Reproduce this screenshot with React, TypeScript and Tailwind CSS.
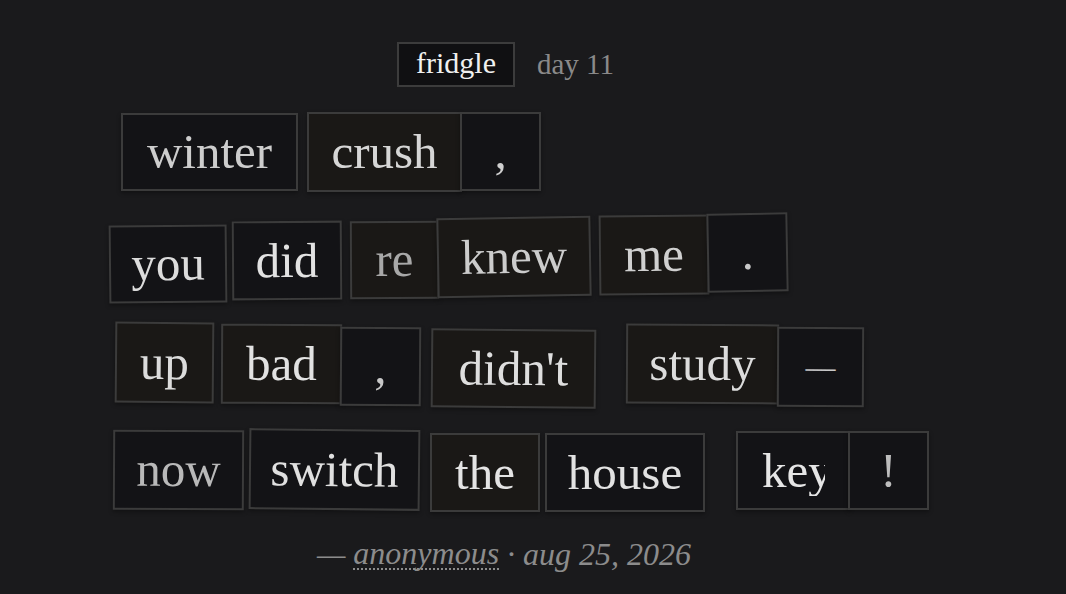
import React from "react";

type T = { t: string; c: string; inner?: string };

const WARM = "bg-[#1a1816]";
const COOL = "bg-[#131316]";

const rows: { cls: string; tiles: T[] }[] = [
  {
    cls: "mt-[25px] h-[80px]",
    tiles: [
      { t: "winter", c: `ml-[121px] mt-[1px] w-[177px] h-[78px] ${COOL} text-[#cdcdcd]` },
      { t: "crush", c: `ml-[9px] mt-0 w-[155px] h-[80px] ${WARM} text-[#d6d6d6]` },
      { t: ",", c: `ml-[-2px] mt-0 w-[81px] h-[79px] ${COOL} text-[#cfcfcf]` },
    ],
  },
  {
    cls: "mt-[21px] h-[92px]",
    tiles: [
      { t: "you", c: `ml-[109px] mt-[12px] w-[118px] h-[78px] ${COOL} text-[#dcdcdc] rotate-[-0.6deg]` },
      { t: "did", c: `ml-[5px] mt-[8px] w-[110px] h-[79px] ${COOL} text-[#e2e2e2] rotate-[-0.4deg]` },
      { t: "re", c: `ml-[8px] mt-[8px] w-[89px] h-[78px] ${WARM} text-[#a8a8a8] rotate-[-0.3deg]` },
      { t: "knew", c: `ml-[-2px] mt-[4px] w-[154px] h-[80px] ${WARM} text-[#cccccc] rotate-[-1deg]` },
      { t: "me", c: `ml-[8px] mt-[2px] w-[110px] h-[80px] ${WARM} text-[#d0d0d0] rotate-[-0.6deg]` },
      { t: ".", c: `ml-[-2px] mt-0 w-[81px] h-[79px] ${COOL} text-[#c8c8c8] rotate-[-1deg]` },
    ],
  },
  {
    cls: "mt-[17px] h-[88px]",
    tiles: [
      { t: "up", c: `ml-[115px] mt-0 w-[99px] h-[81px] ${WARM} text-[#dcdcdc] rotate-[0.5deg]` },
      { t: "bad", c: `ml-[7px] mt-[2px] w-[121px] h-[80px] ${WARM} text-[#e2e2e2] rotate-[0.3deg]` },
      { t: ",", c: `ml-[-2px] mt-[5px] w-[81px] h-[79px] ${COOL} text-[#c8c8c8] rotate-[0.4deg]` },
      { t: "didn't", c: `ml-[10px] mt-[7px] w-[165px] h-[79px] ${WARM} text-[#dedede] rotate-[0.5deg]` },
      { t: "study", c: `ml-[30px] mt-[2px] w-[153px] h-[80px] ${WARM} text-[#dcdcdc] rotate-[0.3deg]` },
      { t: "—", c: `ml-[-2px] mt-[5px] w-[87px] h-[80px] ${COOL} text-[#c8c8c8] !text-[30px] rotate-[0.3deg]` },
    ],
  },
  {
    cls: "mt-[19px] h-[84px]",
    tiles: [
      { t: "now", c: `ml-[113px] mt-[1px] w-[131px] h-[80px] ${COOL} text-[#b9b9b9] rotate-[0.3deg]` },
      { t: "switch", c: `ml-[5px] mt-0 w-[171px] h-[81px] ${COOL} text-[#e0e0e0] rotate-[0.6deg]` },
      { t: "the", c: `ml-[10px] mt-[4px] w-[110px] h-[79px] ${WARM} text-[#e4e4e4]` },
      { t: "house", c: `ml-[5px] mt-[4px] w-[160px] h-[79px] ${COOL} text-[#e2e2e2]` },
      { t: "key", c: `ml-[31px] mt-[2px] w-[114px] h-[79px] ${COOL} text-[#e6e6e6]`, inner: "w-[64px] overflow-hidden pl-[1px]" },
      { t: "!", c: `ml-[-2px] mt-[2px] w-[81px] h-[79px] ${COOL} text-[#bdbdbd]` },
    ],
  },
];

export default function App() {
  return (
    <div
      className="w-[1066px] h-[594px] bg-[#1a1a1c] overflow-hidden flex flex-col"
      style={{ fontFamily: '"Liberation Serif", "DejaVu Serif", serif' }}
    >
      <div className="mt-[42px] flex items-center pl-[397px]">
        <div className="w-[118px] h-[45px] bg-[#101012] border-2 border-[#3c3c3c] flex items-center justify-center text-[30px] leading-none text-[#f0f0f0] pb-[3px]">
          fridgle
        </div>
        <div className="ml-[22px] text-[29px] leading-none text-[#8a8a8a] pb-[1px]">day 11</div>
      </div>

      {rows.map((r, i) => (
        <div key={i} className={`flex items-start ${r.cls}`}>
          {r.tiles.map((tile, j) => (
            <div
              key={j}
              className={`shrink-0 border-2 border-[#3b3b3b] flex items-center justify-center text-[49px] leading-none overflow-hidden shadow-[0_2px_4px_rgba(0,0,0,0.35)] ${tile.c}`}
            >
              {tile.inner ? (
                <span className={`block whitespace-nowrap pb-[1px] ${tile.inner}`}>{tile.t}</span>
              ) : (
                <span className="block whitespace-nowrap pb-[1px]">{tile.t}</span>
              )}
            </div>
          ))}
        </div>
      ))}

      <div className="mt-[25px] flex justify-center w-[1008px] italic text-[32px] leading-none text-[#8c8c8c]">
        <span>—&nbsp;</span>
        <span className="border-b-2 border-dotted border-[#8c8c8c] leading-[30px]">anonymous</span>
        <span>&nbsp;· aug 25, 2026</span>
      </div>
    </div>
  );
}
